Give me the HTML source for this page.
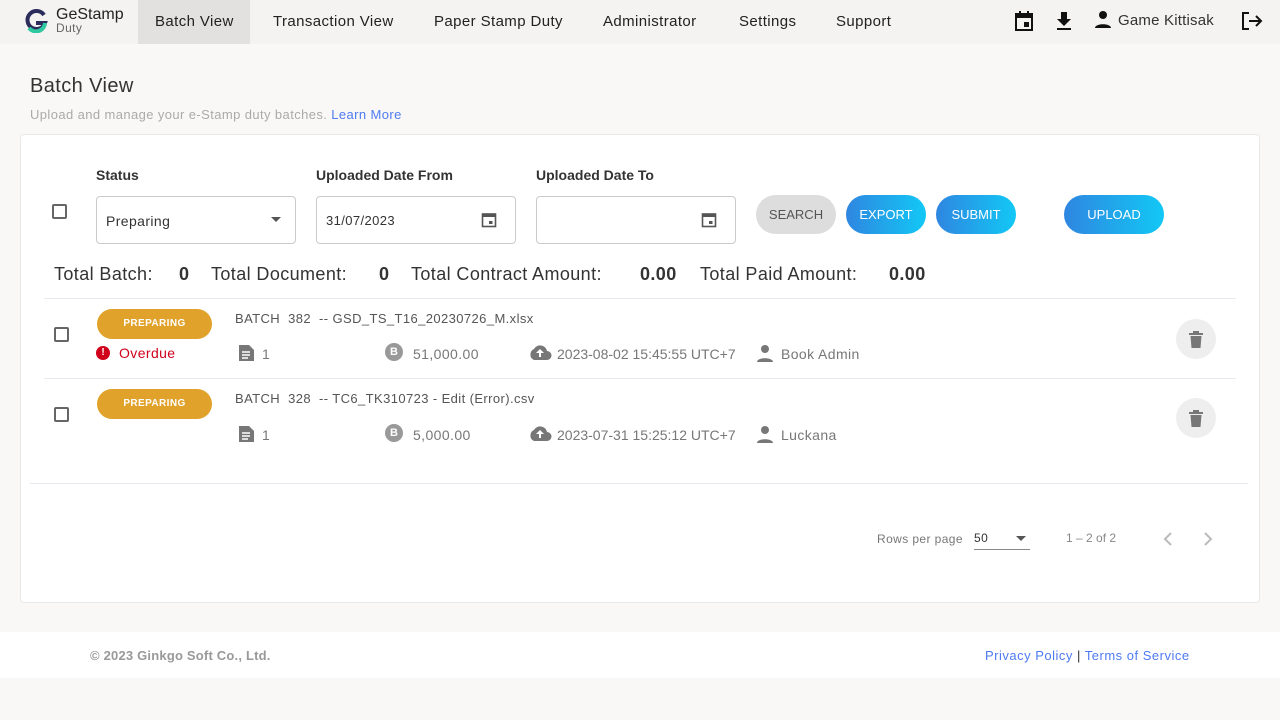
<!DOCTYPE html>
<html><head><meta charset="utf-8"><style>
*{box-sizing:border-box;margin:0;padding:0}
body{width:1280px;height:720px;background:#f9f8f7;font-family:"Liberation Sans",sans-serif;color:#333;position:relative;overflow:hidden;letter-spacing:0.4px}
.a{position:absolute}
.nav{top:0;left:0;width:1280px;height:44px;background:#f4f3f2}
.nl{top:13px;font-size:15px;color:#222}
.card{left:20px;top:134px;width:1240px;height:469px;background:#fff;border:1px solid #e8e8e8;border-radius:4px}
.cb{width:15px;height:15px;border:2px solid #666;border-radius:2px}
.lab{font-size:14px;font-weight:bold;color:#333}
.inp{height:48px;border:1px solid #ccc;border-radius:4px;background:#fff;font-size:14px;padding:16px 9px;color:#333}
.btn{height:39px;border-radius:20px;color:#fff;font-size:13px;text-align:center;line-height:39px;letter-spacing:0}
.g{background:linear-gradient(90deg,#2f86e0,#12c8f5)}
.pill{width:115px;height:30px;border-radius:15px;background:#e0a22a;color:#fff;font-size:10px;font-weight:bold;text-align:center;line-height:30px}
.t{font-size:13px;color:#555}
.m{font-size:14px;color:#777}
.tot{top:264px;font-size:18px;color:#333}
.del{width:40px;height:40px;border-radius:50%;background:#eee}
</style></head><body>
<div class="a nav"></div>
<svg class="a" style="left:24px;top:9px" width="24" height="24" viewBox="0 0 24 24"><path d="M20 6A9 9 0 1 0 21 14H12" fill="none" stroke="#2c2c5c" stroke-width="4"/><path d="M21 14A9 9 0 0 1 5 19" fill="none" stroke="#2fc8a0" stroke-width="4"/></svg>
<div class="a" style="left:56px;top:6px;font-size:16px;color:#222;letter-spacing:0">GeStamp</div>
<div class="a" style="left:56px;top:21px;font-size:12px;color:#666">Duty</div>
<div class="a" style="left:138px;top:0;width:112px;height:44px;background:#e2e1e0"></div>
<div class="a nl" style="left:155px">Batch View</div>
<div class="a nl" style="left:273px">Transaction View</div>
<div class="a nl" style="left:434px">Paper Stamp Duty</div>
<div class="a nl" style="left:603px">Administrator</div>
<div class="a nl" style="left:739px">Settings</div>
<div class="a nl" style="left:836px">Support</div>
<svg class="a" style="left:1014px;top:10px" width="20" height="22" viewBox="0 0 20 22"><rect x="2" y="4" width="16" height="16" fill="none" stroke="#111" stroke-width="2"/><rect x="2" y="4" width="16" height="4" fill="#111"/><rect x="5" y="1" width="2" height="4" fill="#111"/><rect x="13" y="1" width="2" height="4" fill="#111"/><rect x="10" y="12" width="5" height="5" fill="#111"/></svg>
<svg class="a" style="left:1055px;top:11px" width="18" height="20" viewBox="0 0 18 20"><path d="M6 1h6v7h4l-7 7-7-7h4z M2 17h14v2H2z" fill="#111"/></svg>
<svg class="a" style="left:1094px;top:10px" width="18" height="18" viewBox="0 0 18 18"><circle cx="9" cy="5" r="4" fill="#111"/><path d="M1 18c0-5 16-5 16 0z" fill="#111"/></svg>
<div class="a" style="left:1118px;top:12px;font-size:15px;color:#333;letter-spacing:0.2px">Game Kittisak</div>
<svg class="a" style="left:1241px;top:11px" width="22" height="20" viewBox="0 0 22 20"><path d="M8 2H2v16h6" fill="none" stroke="#111" stroke-width="2"/><path d="M8 10h12M15 5l5 5-5 5" fill="none" stroke="#111" stroke-width="2"/></svg>

<div class="a" style="left:30px;top:75px;font-size:20px;color:#333">Batch View</div>
<div class="a" style="left:30px;top:107px;font-size:13px;color:#aaa">Upload and manage your e-Stamp duty batches. <span style="color:#4f7bf2">Learn More</span></div>

<div class="a card"></div>
<div class="a cb" style="left:52px;top:204px"></div>
<div class="a lab" style="left:96px;top:167px;letter-spacing:0">Status</div>
<div class="a lab" style="left:316px;top:167px;letter-spacing:0">Uploaded Date From</div>
<div class="a lab" style="left:536px;top:167px;letter-spacing:0">Uploaded Date To</div>
<div class="a inp" style="left:96px;top:196px;width:200px">Preparing<span style="position:absolute;right:14px;top:20px;border:5px solid transparent;border-top-color:#555"></span></div>
<div class="a inp" style="left:316px;top:196px;width:200px;font-size:13px">31/07/2023</div>
<div class="a inp" style="left:536px;top:196px;width:200px"></div>
<svg class="a" style="left:481px;top:211px" width="16" height="17" viewBox="0 0 16 17"><rect x="1.5" y="3" width="13" height="12.5" fill="none" stroke="#555" stroke-width="1.6"/><rect x="1.5" y="3" width="13" height="3" fill="#555"/><rect x="8" y="10" width="3.5" height="3" fill="#555"/></svg>
<svg class="a" style="left:701px;top:211px" width="16" height="17" viewBox="0 0 16 17"><rect x="1.5" y="3" width="13" height="12.5" fill="none" stroke="#555" stroke-width="1.6"/><rect x="1.5" y="3" width="13" height="3" fill="#555"/><rect x="8" y="10" width="3.5" height="3" fill="#555"/></svg>
<div class="a btn" style="left:756px;top:195px;width:80px;background:#ddd;color:#555">SEARCH</div>
<div class="a btn g" style="left:846px;top:195px;width:80px">EXPORT</div>
<div class="a btn g" style="left:936px;top:195px;width:80px">SUBMIT</div>
<div class="a btn g" style="left:1064px;top:195px;width:100px">UPLOAD</div>

<div class="a tot" style="left:54px">Total Batch:</div><b class="a tot" style="left:179px">0</b>
<div class="a tot" style="left:211px">Total Document:</div><b class="a tot" style="left:379px">0</b>
<div class="a tot" style="left:411px">Total Contract Amount:</div><b class="a tot" style="left:640px">0.00</b>
<div class="a tot" style="left:700px">Total Paid Amount:</div><b class="a tot" style="left:889px">0.00</b>
<div class="a" style="left:44px;top:298px;width:1192px;height:1px;background:#e8e8ee"></div>
<div class="a" style="left:44px;top:378px;width:1192px;height:1px;background:#e8e8ee"></div>
<div class="a" style="left:30px;top:483px;width:1218px;height:1px;background:#e8e8ee"></div>

<div class="a cb" style="left:54px;top:327px"></div>
<div class="a pill" style="left:97px;top:309px">PREPARING</div>
<div class="a" style="left:96px;top:346px;width:14px;height:14px;border-radius:50%;background:#d0021b;color:#fff;font-size:10px;font-weight:bold;text-align:center;line-height:14px;letter-spacing:0">!</div>
<div class="a" style="left:119px;top:345px;font-size:14px;color:#d0021b">Overdue</div>
<div class="a t" style="left:235px;top:311px">BATCH &nbsp;382 &nbsp;-- GSD_TS_T16_20230726_M.xlsx</div>
<div class="a cb" style="left:54px;top:407px"></div>
<div class="a pill" style="left:97px;top:389px">PREPARING</div>
<div class="a t" style="left:235px;top:391px">BATCH &nbsp;328 &nbsp;-- TC6_TK310723 - Edit (Error).csv</div>

<svg class="a" style="left:237px;top:344px" width="18" height="18" viewBox="0 0 18 18"><path d="M2 1h10l5 5v11H2z" fill="#777"/><path d="M5 8h8M5 11h8M5 14h6" stroke="#fff" stroke-width="1.5"/></svg>
<svg class="a" style="left:237px;top:425px" width="18" height="18" viewBox="0 0 18 18"><path d="M2 1h10l5 5v11H2z" fill="#777"/><path d="M5 8h8M5 11h8M5 14h6" stroke="#fff" stroke-width="1.5"/></svg>
<div class="a m" style="left:262px;top:346px">1</div>
<div class="a m" style="left:262px;top:427px">1</div>
<div class="a" style="left:385px;top:343px;width:18px;height:18px;border-radius:50%;background:#999;color:#fff;font-size:11px;font-weight:bold;text-align:center;line-height:18px;letter-spacing:0">B</div>
<div class="a" style="left:385px;top:424px;width:18px;height:18px;border-radius:50%;background:#999;color:#fff;font-size:11px;font-weight:bold;text-align:center;line-height:18px;letter-spacing:0">B</div>
<div class="a m" style="left:413px;top:346px">51,000.00</div>
<div class="a m" style="left:413px;top:427px">5,000.00</div>
<svg class="a" style="left:528px;top:344px" width="24" height="16" viewBox="0 0 24 16"><path d="M6 16a6 6 0 0 1 0-11 7 7 0 0 1 13 2 4.5 4.5 0 0 1 0 9z" fill="#777"/><path d="M12 5l-4 4h3v4h2V9h3z" fill="#fff"/></svg>
<svg class="a" style="left:528px;top:425px" width="24" height="16" viewBox="0 0 24 16"><path d="M6 16a6 6 0 0 1 0-11 7 7 0 0 1 13 2 4.5 4.5 0 0 1 0 9z" fill="#777"/><path d="M12 5l-4 4h3v4h2V9h3z" fill="#fff"/></svg>
<div class="a m" style="left:557px;top:346px;letter-spacing:0">2023-08-02 15:45:55 UTC+7</div>
<div class="a m" style="left:557px;top:427px;letter-spacing:0">2023-07-31 15:25:12 UTC+7</div>
<svg class="a" style="left:756px;top:344px" width="18" height="18" viewBox="0 0 18 18"><circle cx="9" cy="5" r="4" fill="#777"/><path d="M1 18c0-5 16-5 16 0z" fill="#777"/></svg>
<svg class="a" style="left:756px;top:425px" width="18" height="18" viewBox="0 0 18 18"><circle cx="9" cy="5" r="4" fill="#777"/><path d="M1 18c0-5 16-5 16 0z" fill="#777"/></svg>
<div class="a m" style="left:781px;top:346px">Book Admin</div>
<div class="a m" style="left:781px;top:427px">Luckana</div>
<div class="a del" style="left:1176px;top:319px"></div>
<div class="a del" style="left:1176px;top:398px"></div>
<svg class="a" style="left:1189px;top:331px" width="14" height="17" viewBox="0 0 14 17"><path d="M0 2h14v2H0zM4 0h6v2H4zM1.5 5h11l-1 12h-9z" fill="#777"/></svg>
<svg class="a" style="left:1189px;top:410px" width="14" height="17" viewBox="0 0 14 17"><path d="M0 2h14v2H0zM4 0h6v2H4zM1.5 5h11l-1 12h-9z" fill="#777"/></svg>

<div class="a" style="left:877px;top:532px;font-size:12px;color:#777">Rows per page</div>
<div class="a" style="left:974px;top:531px;width:56px;height:19px;border-bottom:1px solid #888;font-size:12px;color:#333">50<span style="position:absolute;right:4px;top:5px;border:5px solid transparent;border-top-color:#555"></span></div>
<div class="a" style="left:1066px;top:531px;font-size:12px;color:#888;letter-spacing:0">1 – 2 of 2</div>
<svg class="a" style="left:1160px;top:531px" width="60" height="16" viewBox="0 0 60 16"><path d="M11 2L5 8l6 6" fill="none" stroke="#bbb" stroke-width="2"/><path d="M45 2l6 6-6 6" fill="none" stroke="#bbb" stroke-width="2"/></svg>

<div class="a" style="left:0;top:632px;width:1280px;height:46px;background:#fff"></div>
<div class="a" style="left:90px;top:648px;font-size:13px;color:#999;font-weight:bold;letter-spacing:0.2px">© 2023 Ginkgo Soft Co., Ltd.</div>
<div class="a" style="left:985px;top:648px;font-size:13px;color:#4f7bf2;letter-spacing:0.5px">Privacy Policy <span style="color:#333">|</span> Terms of Service</div>
</body></html>
